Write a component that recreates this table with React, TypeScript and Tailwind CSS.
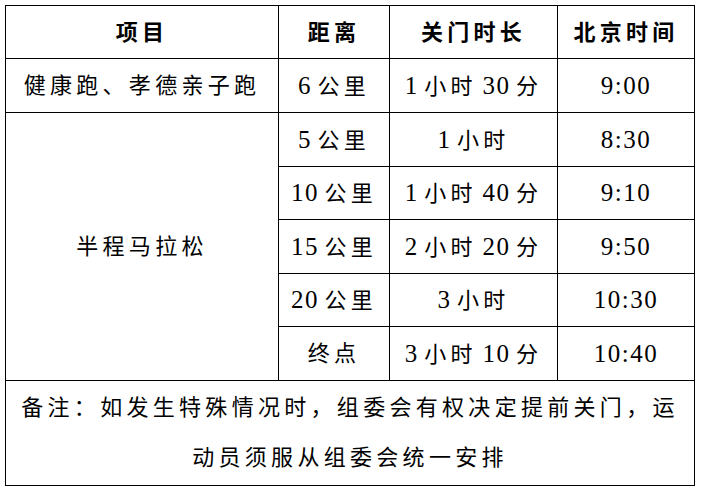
const rows = [
  { dist: "5 公里", limit: "1 小时", time: "8:30" },
  { dist: "10 公里", limit: "1 小时 40 分", time: "9:10" },
  { dist: "15 公里", limit: "2 小时 20 分", time: "9:50" },
  { dist: "20 公里", limit: "3 小时", time: "10:30" },
  { dist: "终点", limit: "3 小时 10 分", time: "10:40" },
];

const cell = "flex items-center justify-center bg-white";

// digits are set larger and tighter than the CJK text; spaces get no tracking
function Txt({ text }: { text: string }) {
  const parts = text.split(/([0-9:]+| )/).filter(Boolean);
  return (
    <span>
      {parts.map((p, i) => {
        if (/^[0-9:]+$/.test(p)) {
          return (
            <span key={i} className="text-[25px] tracking-[1.5px]">
              {p}
            </span>
          );
        }
        if (p === " ") {
          return (
            <span key={i} className="tracking-normal">
              {" "}
            </span>
          );
        }
        return <span key={i}>{p}</span>;
      })}
    </span>
  );
}

export default function App() {
  return (
    <div className="min-h-[492px] w-[702px] bg-white pl-[5px] pt-[5px] font-['Liberation_Serif','Noto_Sans_CJK_SC',serif] text-[22px] tracking-[4.3px] text-black">
      <div className="grid w-[690px] grid-cols-[272px_110px_167px_136px] grid-rows-[52px_53px_53px_52px_53px_52px_53px_104px] gap-px bg-black p-px">
        <div className={`${cell} font-bold`}>项目</div>
        <div className={`${cell} font-bold`}>距离</div>
        <div className={`${cell} font-bold`}>关门时长</div>
        <div className={`${cell} font-bold`}>北京时间</div>

        <div className={cell}>健康跑、孝德亲子跑</div>
        <div className={cell}>
          <Txt text="6 公里" />
        </div>
        <div className={cell}>
          <Txt text="1 小时 30 分" />
        </div>
        <div className={cell}>
          <Txt text="9:00" />
        </div>

        <div className={`${cell} col-start-1 row-span-5 row-start-3`}>半程马拉松</div>
        {rows.map((r) => (
          <div key={r.dist} className="contents">
            <div className={cell}>
              <Txt text={r.dist} />
            </div>
            <div className={cell}>
              <Txt text={r.limit} />
            </div>
            <div className={cell}>
              <Txt text={r.time} />
            </div>
          </div>
        ))}

        <div className={`${cell} col-span-4 text-center leading-[50px]`}>
          <p>
            备注：如发生特殊情况时，组委会有权决定提前关门，运
            <br />
            动员须服从组委会统一安排
          </p>
        </div>
      </div>
    </div>
  );
}
